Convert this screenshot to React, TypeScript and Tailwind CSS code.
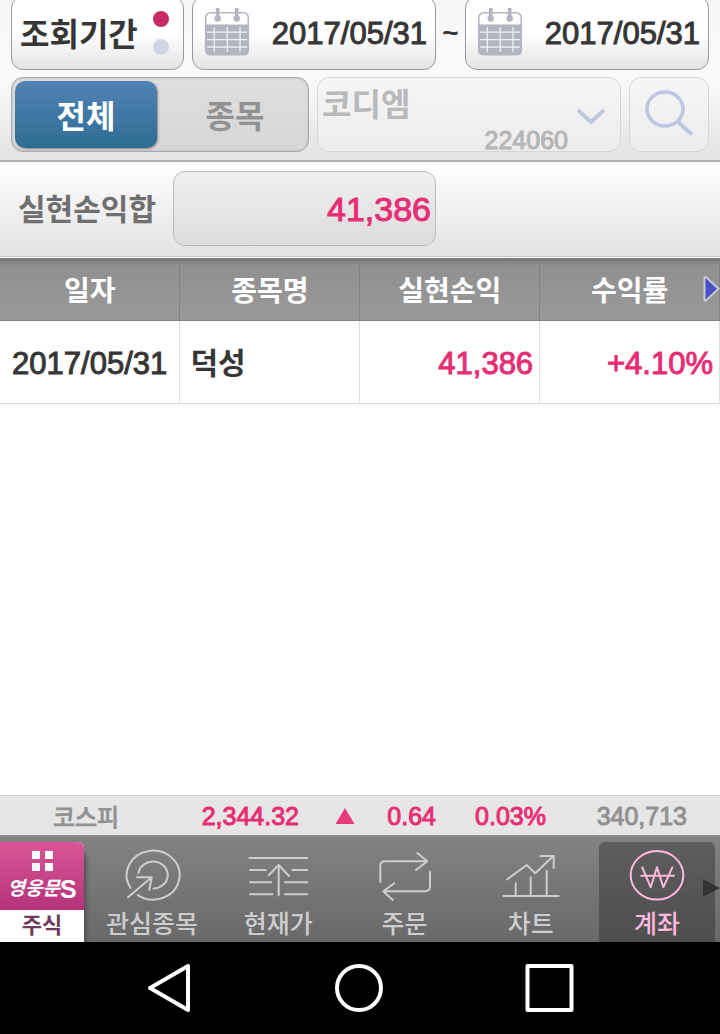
import { useState, type ReactNode } from "react";
import clsx from "clsx";

const ROWS = [{ date: "2017/05/31", name: "덕성", profit: "41,386", rate: "+4.10%" }];

const HEADERS = ["일자", "종목명", "실현손익", "수익률"];

// figures are set lighter than the labels: regular weight with a thin outline
const FIGURES = "font-normal [-webkit-text-stroke:1px]";

const TABS: { label: string; icon: ReactNode }[] = [
  {
    label: "관심종목",
    icon: (
      <>
        <path d="M8.600 40A26.500 24.500 0 1 1 15.800 47.100" />
        <path d="M16.500 25A14.700 13.500 0 1 1 31.500 40.500" />
        <path d="M6 49.300L29.700 29.300M15 29.300H29.700L27.300 42" />
      </>
    ),
  },
  {
    label: "현재가",
    icon: (
      <>
        <path d="M1.300 10H59.700M2 22H17.700M44.300 22H59.700M2 34.300H23.300M37 34.300H59.700M2 46.300H24.300M37 46.300H59.700" />
        <path d="M30.700 47.300V17M20.700 27.300L30.700 17L41 28" />
      </>
    ),
  },
  {
    label: "주문",
    icon: (
      <>
        <path d="M5.300 34V18Q5.300 13.300 10 13.300H52M42.300 5L52.300 13.300L41 22" />
        <path d="M55 23.700V38.600Q55 43.300 50.300 43.300H8.600M19.300 35.300L8.300 43.300L17.700 52" />
      </>
    ),
  },
  {
    label: "차트",
    icon: (
      <>
        <path d="M2.300 48H57.700M14.700 48V35.300M29.700 48V29.300M45.700 48V22.700" />
        <path d="M6.300 31.300L25.700 17L34.300 25.300L52.300 8M39.300 8H52.700V20" />
      </>
    ),
  },
  {
    label: "계좌",
    icon: (
      <>
        <ellipse cx="30" cy="27.300" rx="26.300" ry="24.300" />
        <path d="M15.300 19.300L23.700 39.300L30 19.300L36.300 39.300L45.300 19.300M14.300 27.700H47" />
      </>
    ),
  },
];

function CalendarIcon() {
  return (
    <svg width="46" height="48" viewBox="0 0 46 48" aria-hidden="true">
      <rect x="1.700" y="4.700" width="42.600" height="41.600" rx="5" fill="#fdfdfd" stroke="#b3b6c1" strokeWidth="1.600" />
      <path d="M1 16.500H45V42Q45 47.500 39.500 47.500H6.500Q1 47.500 1 42Z" fill="#b3b6c1" />
      <path d="M3 24.200H43M3 31.700H43M3 39.200H43M10.300 19V44M23.300 19V44M36 19V44" stroke="#f3f3f6" strokeWidth="1.200" />
      <path d="M13.700 0V10M32.700 0V10" stroke="#b3b6c1" strokeWidth="3.600" />
      <circle cx="13.700" cy="10.500" r="3.200" fill="#b3b6c1" />
      <circle cx="32.700" cy="10.500" r="3.200" fill="#b3b6c1" />
    </svg>
  );
}

function DateButton({ value, label }: { value: string; label: string }) {
  return (
    <button
      type="button"
      aria-label={label + " " + value}
      className="flex h-[74px] flex-1 items-center justify-between rounded-xl border border-[#999] bg-linear-to-b from-white from-50% to-[#e4e4e4] pr-2 pb-0.5 pl-[11px]"
    >
      <CalendarIcon />
      <span className={clsx("pt-1 text-[31px] leading-10", FIGURES)}>{value}</span>
    </button>
  );
}

function SearchPanel() {
  const [mode, setMode] = useState("전체");

  return (
    <section className="flex flex-col gap-[7px] overflow-hidden border-b-2 border-[#b0b0b0] bg-linear-to-b from-[#f6f6f6] via-[#fafafa] to-[#e2e2e2] px-[11px] pb-2">
      <div className="-mt-1 flex items-center">
        <button
          type="button"
          className="mr-2 flex h-[74px] w-[173px] items-center justify-between rounded-xl border border-[#999] bg-linear-to-b from-white from-50% to-[#e4e4e4] pr-3.5 pl-2"
        >
          <span className="pt-1 text-[32px] leading-10">조회기간</span>
          <span className="flex flex-col gap-3">
            <i className="size-4 rounded-full bg-[#c82a64]" />
            <i className="size-4 rounded-full bg-[#d1d6e2]" />
          </span>
        </button>
        <DateButton label="시작일" value="2017/05/31" />
        <span className="w-[29px] text-center text-[28px] leading-10">~</span>
        <DateButton label="종료일" value="2017/05/31" />
      </div>

      <div className="flex h-[75px] gap-2">
        <div className="flex w-[298px] rounded-xl border border-[#aaa] bg-linear-to-b from-[#dfdfdf] to-[#d6d6d6] p-[3px] shadow-[inset_0_0_2px_#aaa]">
          {["전체", "종목"].map((m) => (
            <button
              key={m}
              type="button"
              aria-pressed={mode === m}
              onClick={() => setMode(m)}
              className={clsx(
                "pt-1 text-[32px] leading-10",
                mode === m
                  ? "w-[142px] rounded-[10px] bg-linear-to-b from-[#5183b5] to-[#2d6d94] text-white shadow-[1px_1px_2px_#888]"
                  : "flex-1 pl-2 text-[#919191]",
              )}
            >
              {m}
            </button>
          ))}
        </div>

        <div className="relative flex-1">
          <select
            aria-label="종목 선택"
            disabled
            className="h-full w-full appearance-none rounded-xl border border-[#d6d6d6] bg-linear-to-b from-[#f6f6f6] to-[#ececec] pb-5 pl-1 text-[32px] font-bold text-[#b9b9b9] opacity-100"
          >
            <option>코디엠</option>
          </select>
          <span className={clsx("absolute right-[53px] bottom-0 text-[25px] leading-6 text-[#b5b5b5]", FIGURES)}>
            224060
          </span>
          <svg className="absolute right-4 bottom-[26px]" width="28" height="18" viewBox="0 0 28 18" aria-hidden="true">
            <path d="M1 2L14 14L27 2" fill="none" stroke="#bfc6e0" strokeWidth="4" />
          </svg>
        </div>

        <button
          type="button"
          aria-label="검색"
          disabled
          className="flex w-20 items-center justify-center rounded-xl border border-[#d6d6d6] bg-linear-to-b from-[#f6f6f6] to-[#ececec] pb-1"
        >
          <svg width="50" height="48" viewBox="0 0 50 48" fill="none" stroke="#bfc6e0" aria-hidden="true">
            <ellipse cx="21" cy="20" rx="18" ry="17" strokeWidth="3.600" />
            <path d="M33 32L48 45.500" strokeWidth="4" />
          </svg>
        </button>
      </div>
    </section>
  );
}

function ProfitTotal() {
  return (
    <section className="flex h-[95px] items-center border-b border-[#c4c4c4] bg-linear-to-b from-white to-[#e2e2e2] pb-0.5 pl-[18px]">
      <label htmlFor="total" className="w-[155px] pt-1 text-[30px] leading-10 text-[#6f6f6f]">
        실현손익합
      </label>
      <input
        id="total"
        readOnly
        value="41,386"
        className={clsx(
          "h-[75px] w-[263px] rounded-xl border border-[#bbb] bg-linear-to-b from-[#f0f0f0] to-[#dcdcdc] pt-0.5 pr-1 text-right text-[34px] text-[#e62e74]",
          FIGURES,
        )}
      />
    </section>
  );
}

function ProfitTable() {
  return (
    <div className="relative mt-px">
      <table className="w-full table-fixed border-collapse">
        <thead>
          <tr className="h-[62px] bg-linear-to-b from-[#737373] via-[#909090] via-12% to-[#999]">
            {HEADERS.map((h) => (
              <th key={h} className="border-r border-b border-[#828282] p-0 pt-1.5 text-center text-[28px] leading-9 text-white">
                {h}
              </th>
            ))}
          </tr>
        </thead>
        <tbody>
          {ROWS.map((row) => (
            <tr key={row.name} className="h-[83px] text-[31px] leading-10">
              <td className={clsx("border-r border-b border-[#ddd] p-0 pt-1 text-center", FIGURES)}>{row.date}</td>
              <td className="border-r border-b border-[#ddd] p-0 pt-1 pl-2.5 text-[30px]">{row.name}</td>
              <td className={clsx("border-r border-b border-[#ddd] p-0 pt-1 pr-1.5 text-right text-[#e62e74]", FIGURES)}>
                {row.profit}
              </td>
              <td className={clsx("border-r border-b border-[#ddd] p-0 pt-1 pr-1.5 text-right text-[#e62e74]", FIGURES)}>
                {row.rate}
              </td>
            </tr>
          ))}
        </tbody>
      </table>
      <svg className="absolute top-[17px] right-0" width="18" height="28" viewBox="0 0 18 28" aria-hidden="true">
        <path d="M2.500 2.500V25Q3 26 4 25.500L16.500 13.800L4 2Q3 1.500 2.500 2.500Z" fill="#4851c4" stroke="#c9cad6" strokeWidth="2" />
      </svg>
    </div>
  );
}

function IndexTicker() {
  return (
    <div
      className={clsx(
        "flex h-10 items-center border-t border-[#ccc] bg-[#e6e6e6] pr-[33px] text-[25px] leading-8 text-[#e62e74]",
        FIGURES,
      )}
    >
      <span className="w-[172px] pt-1 text-center text-[24px] text-[#929292]">코스피</span>
      <span className="flex-1 text-right">2,344.32</span>
      <svg className="mr-8 ml-9" width="20" height="16" viewBox="0 0 20 16" aria-hidden="true">
        <path d="M10 0L19.500 16H0.500Z" fill="#e83b7d" />
      </svg>
      <span className="w-[49px] text-right">0.64</span>
      <span className="w-[110px] text-right">0.03%</span>
      <span className="w-[141px] text-right text-[#929292]">340,713</span>
    </div>
  );
}

function TabBar() {
  const [active, setActive] = useState("계좌");

  return (
    <nav className="relative flex h-[107px] overflow-hidden border-t-2 border-[#8d8d8d] bg-linear-to-b from-[#828282] to-[#696969] pt-[5px]">
      <button
        type="button"
        className="mr-[5px] flex w-[84px] shrink-0 flex-col overflow-hidden rounded-tr-md bg-white shadow-[2px_10px_4px_#4c4c4c]"
      >
        <span className="flex h-[68px] w-full flex-col items-center bg-linear-to-b from-[#db5598] to-[#b43378] pt-[9px] text-white">
          <span className="grid grid-cols-2 gap-x-[5px] gap-y-1">
            <i className="size-2 bg-white" />
            <i className="size-2 bg-white" />
            <i className="size-2 bg-white" />
            <i className="size-2 bg-white" />
          </span>
          <span className="flex items-center pt-0.5 text-[19px] leading-8 italic">
            영웅문<b className="text-[25px] not-italic">S</b>
          </span>
        </span>
        <span className="w-full pt-0.5 text-center text-[22px] leading-7 text-[#6f3a5c]">주식</span>
      </button>

      {TABS.map((tab) => (
        <button
          key={tab.label}
          type="button"
          onClick={() => setActive(tab.label)}
          className={clsx(
            "mx-[5px] flex flex-1 flex-col items-center rounded-t-md pt-1.5 whitespace-nowrap",
            active === tab.label ? "bg-linear-to-b from-[#5e5e5e] to-[#4d4d4d] text-[#ffb9dc]" : "text-[#cdcdcd]",
          )}
        >
          <svg
            className="shrink-0"
            width="60"
            height="54"
            viewBox="0 0 60 54"
            fill="none"
            stroke="currentColor"
            strokeWidth="2"
            strokeLinecap="round"
            strokeLinejoin="round"
            aria-hidden="true"
          >
            {tab.icon}
          </svg>
          <span className="-mx-2 pt-1 text-[25px] leading-9 font-medium">{tab.label}</span>
        </button>
      ))}

      <svg className="absolute top-[42px] right-0" width="17" height="18" viewBox="0 0 17 18" aria-hidden="true">
        <path d="M0 0L17 9L0 18Z" fill="#343434" />
      </svg>
    </nav>
  );
}

function SystemBar() {
  return (
    <footer className="grid h-[92px] grid-cols-[1fr_150px_1fr] items-center bg-black">
      <button type="button" aria-label="뒤로" className="mr-[91px] justify-self-end">
        <svg width="48" height="50" viewBox="0 0 48 50" fill="none" stroke="white" strokeWidth="4" strokeLinejoin="round">
          <path d="M42 3V47L4 25Z" />
        </svg>
      </button>
      <button type="button" aria-label="홈" className="justify-self-center">
        <svg width="50" height="50" viewBox="0 0 50 50" fill="none" stroke="white" strokeWidth="4">
          <circle cx="24" cy="25" r="22" />
        </svg>
      </button>
      <button type="button" aria-label="최근 앱" className="ml-[90px] justify-self-start">
        <svg width="50" height="50" viewBox="0 0 50 50" fill="none" stroke="white" strokeWidth="4" strokeLinejoin="round">
          <rect x="2.500" y="3" width="44" height="44" />
        </svg>
      </button>
    </footer>
  );
}

export default function App() {
  return (
    <div className="flex min-h-screen flex-col bg-white font-['Liberation_Sans','Noto_Sans_CJK_KR',sans-serif] font-bold text-[#363636]">
      <SearchPanel />
      <ProfitTotal />
      <main className="flex-1">
        <ProfitTable />
      </main>
      <IndexTicker />
      <TabBar />
      <SystemBar />
    </div>
  );
}
